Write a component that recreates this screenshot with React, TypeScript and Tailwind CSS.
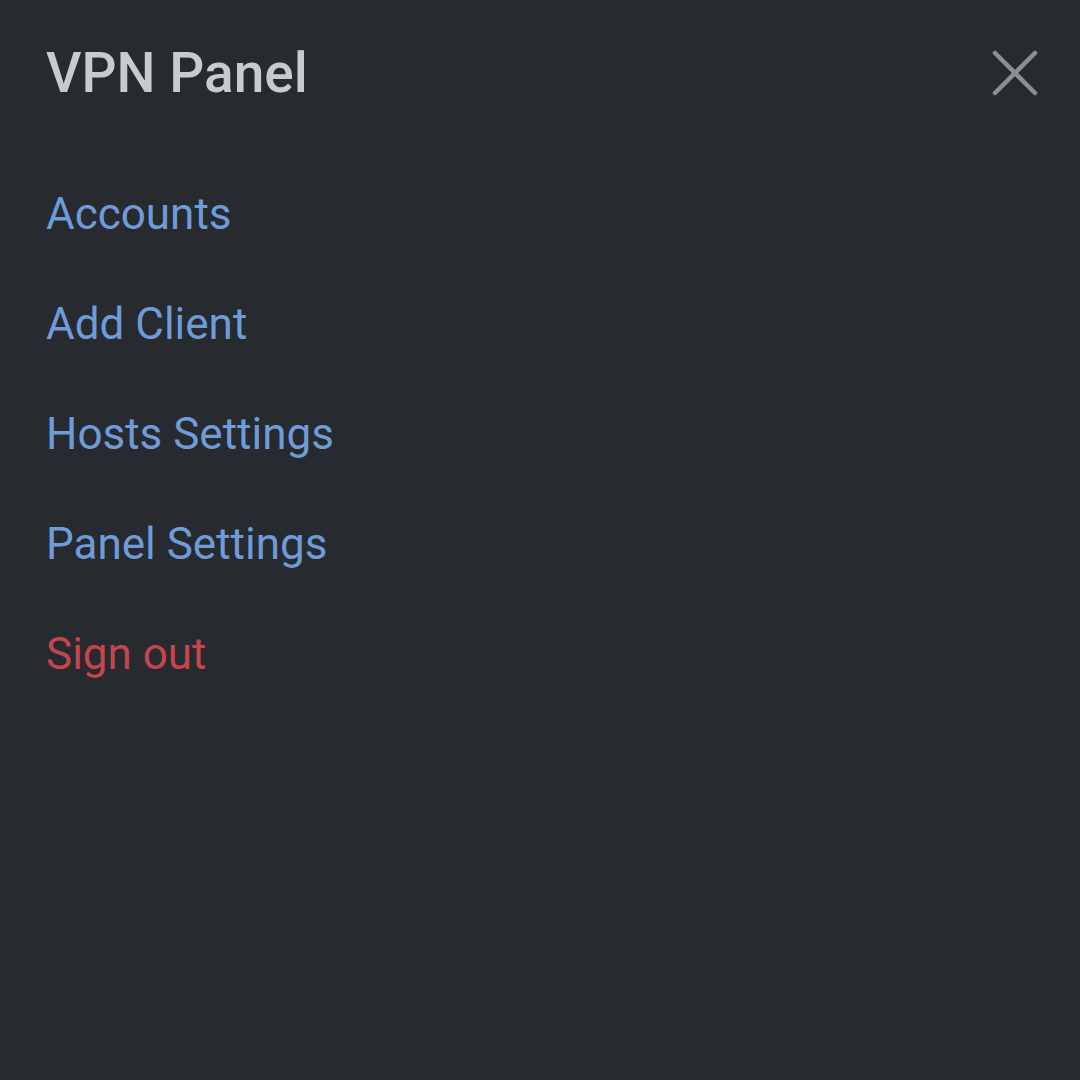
const links = [
  { label: 'Accounts', danger: false },
  { label: 'Add Client', danger: false },
  { label: 'Hosts Settings', danger: false },
  { label: 'Panel Settings', danger: false },
  { label: 'Sign out', danger: true },
];

export default function App() {
  return (
    <div className="w-[1080px] h-[1080px] bg-[#272a2f] font-['Roboto','Liberation_Sans',sans-serif] overflow-hidden">
      <div className="flex items-center justify-between pl-[46px] pr-[39px] pt-[38px] h-[108px]">
        <h1 className="text-[55px] font-medium text-[#c9cacd] leading-none">VPN Panel</h1>
        <button className="w-[52px] h-[52px] flex items-center justify-center text-[#8b8e92]">
          <svg width="48" height="48" viewBox="0 0 48 48" fill="none" stroke="currentColor" strokeWidth="4.5" strokeLinecap="round">
            <path d="M4 4 L44 44 M44 4 L4 44" />
          </svg>
        </button>
      </div>
      <nav className="flex flex-col pl-[46px] pt-[51px]">
        {links.map((link) => (
          <a
            key={link.label}
            href="#"
            className={
              'h-[110px] flex items-center text-[44px] leading-none ' +
              (link.danger ? 'text-[#c4454d]' : 'text-[#6f9bd9]')
            }
          >
            {link.label}
          </a>
        ))}
      </nav>
    </div>
  );
}
